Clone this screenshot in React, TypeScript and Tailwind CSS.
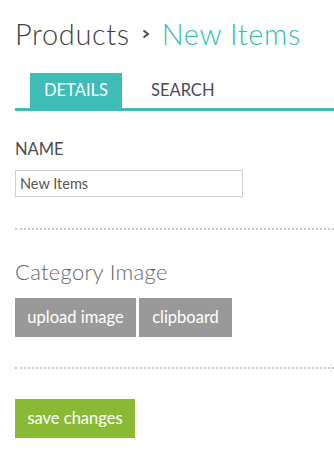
export default function App() {
  return (
    <div className="min-h-[474px] bg-white pl-[15px] font-['Lato',sans-serif]">
      {/* Breadcrumb title */}
      <h1 className="flex h-[40px] items-center pt-[14px] box-content text-[29px] leading-[40px] font-light tracking-[0.6px]">
        <span className="text-[#3f3f3f]">Products</span>
        <svg className="mx-[12px] mt-[-1px]" width="8" height="10" viewBox="0 0 8 10">
          <path d="M1.5 1.5 L6 5 L1.5 8.5" fill="none" stroke="#4d4d4d" strokeWidth="2" />
        </svg>
        <span className="text-[#36bcb4]">New Items</span>
      </h1>

      {/* Tabs */}
      <div className="mt-[19px] flex items-end border-b-[3px] border-[#3dbdb6] pl-[15px]">
        <div className="flex h-[35px] w-[92px] items-center justify-center bg-[#3dbdb6] text-[16.5px] text-white">
          DETAILS
        </div>
        <div className="flex h-[35px] items-center pl-[29px] text-[16.5px] text-[#4a4a5a]">
          SEARCH
        </div>
      </div>

      {/* Name */}
      <div className="mt-[30px] text-[16.5px] leading-[16px] text-[#4d4d4d]">NAME</div>
      <input
        defaultValue="New Items"
        className="mt-[13px] block h-[27px] w-[228px] border border-[#cfcfcf] px-[4px] text-[14.5px] text-[#555] outline-none"
      />

      <div className="mt-[31px] border-t-2 border-dotted border-[#c8c8c8]" />

      {/* Category image */}
      <div className="mt-[30px] text-[22px] leading-[24px] font-light tracking-[0.3px] text-[#666]">Category Image</div>
      <div className="mt-[14px] flex gap-[3px]">
        <button className="h-[39px] w-[121px] bg-[#999999] text-[16.5px] text-white">upload image</button>
        <button className="h-[39px] w-[93px] bg-[#999999] text-[16.5px] text-white">clipboard</button>
      </div>

      <div className="mt-[30px] border-t-2 border-dotted border-[#c8c8c8]" />

      <button className="mt-[30px] block h-[39px] w-[120px] bg-[#8aba34] text-[16.5px] text-white">
        save changes
      </button>
    </div>
  );
}
